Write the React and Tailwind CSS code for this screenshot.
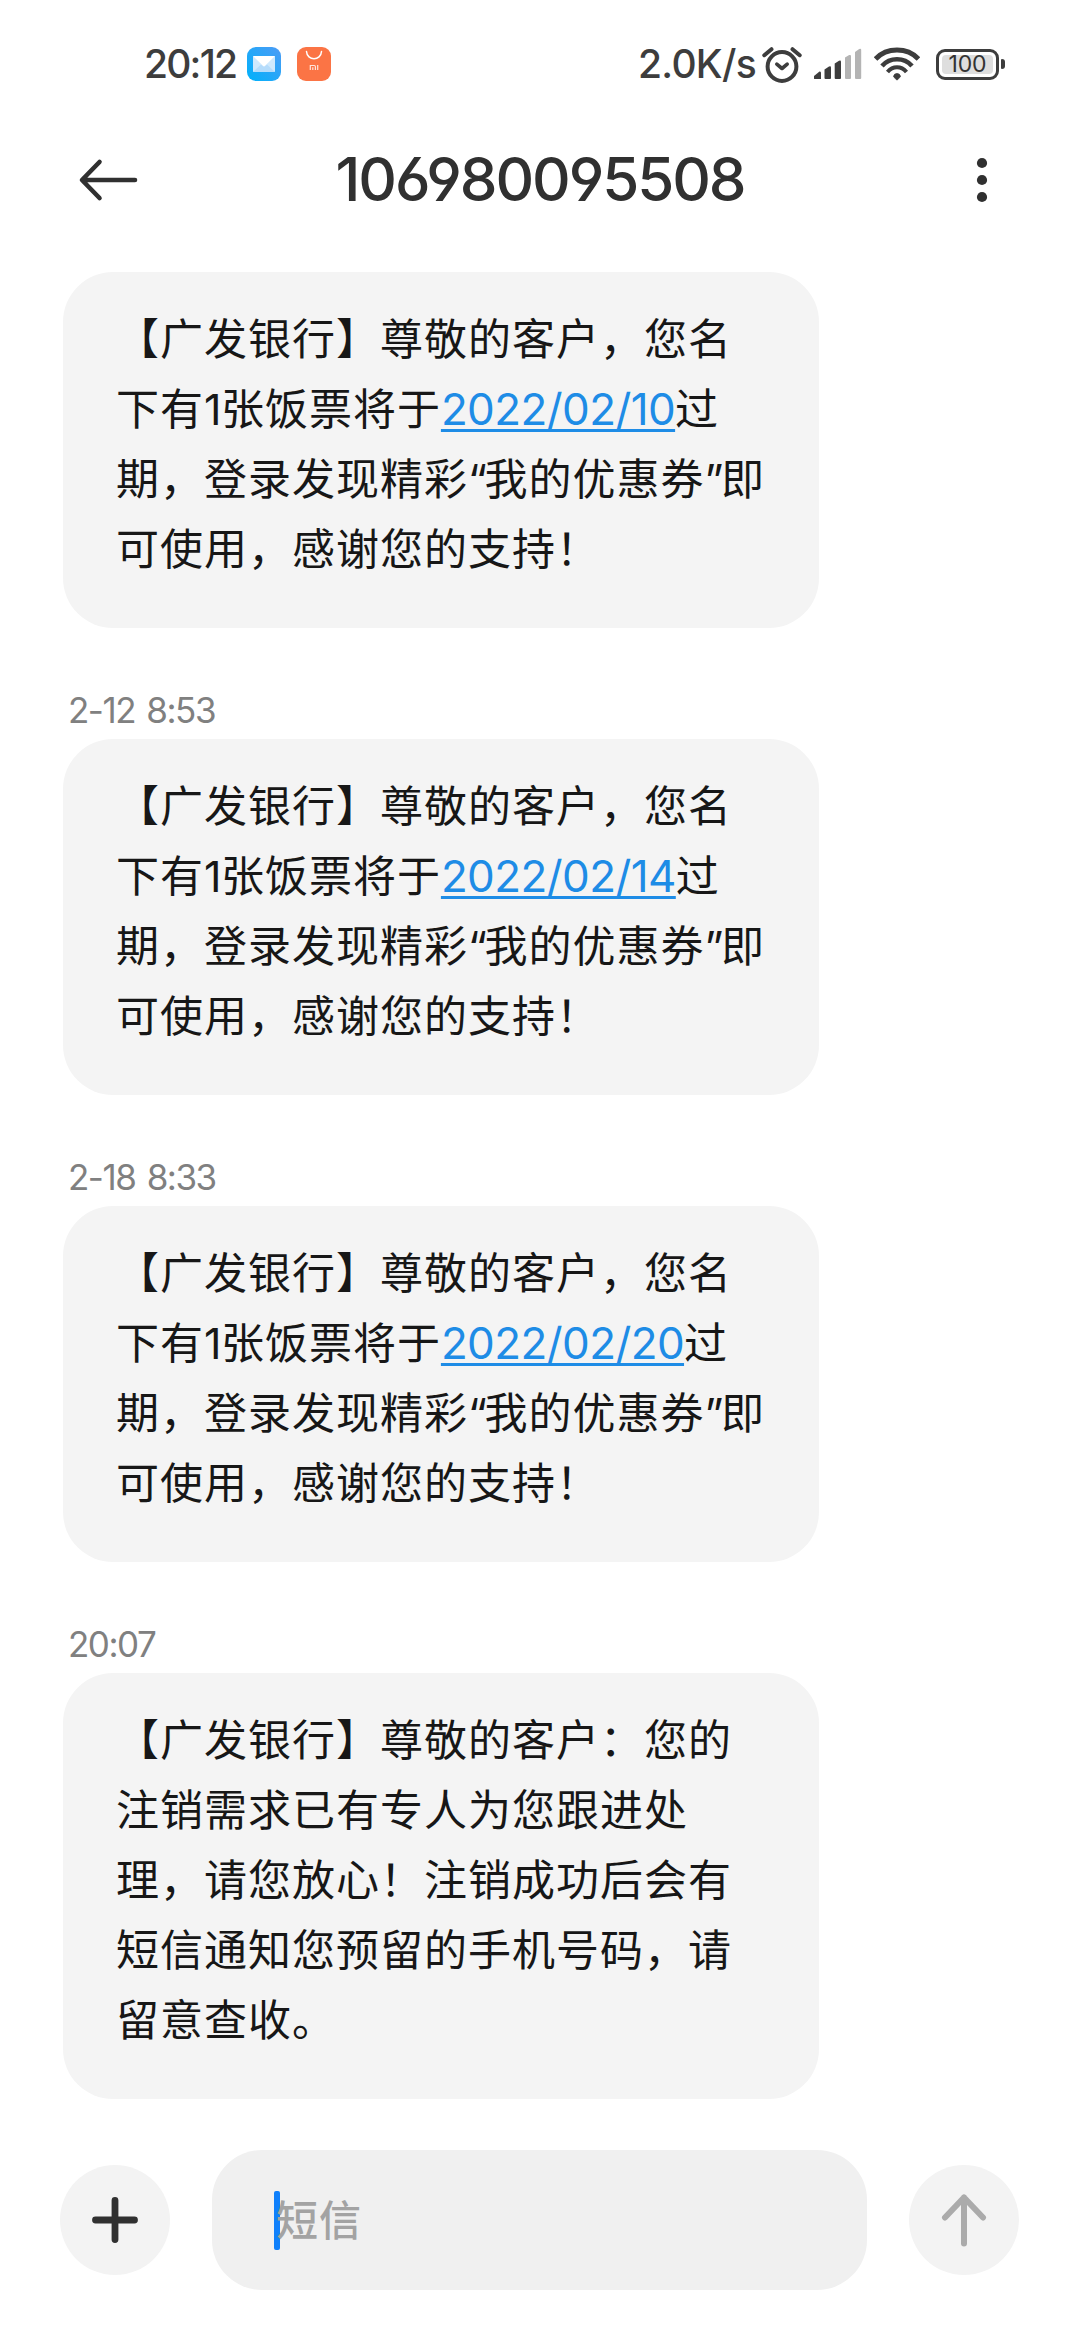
const messages = [
  { id: 1, time: null, lines: ["【广发银行】尊敬的客户，您名", ["下有1张饭票将于", "2022/02/10", "过"], "期，登录发现精彩“我的优惠券”即", "可使用，感谢您的支持！"] },
  { id: 2, time: "2-12 8:53", lines: ["【广发银行】尊敬的客户，您名", ["下有1张饭票将于", "2022/02/14", "过"], "期，登录发现精彩“我的优惠券”即", "可使用，感谢您的支持！"] },
  { id: 3, time: "2-18 8:33", lines: ["【广发银行】尊敬的客户，您名", ["下有1张饭票将于", "2022/02/20", "过"], "期，登录发现精彩“我的优惠券”即", "可使用，感谢您的支持！"] },
  { id: 4, time: "20:07", lines: ["【广发银行】尊敬的客户：您的", "注销需求已有专人为您跟进处", "理，请您放心！注销成功后会有", "短信通知您预留的手机号码，请", "留意查收。"] },
]

function MailIcon() {
  return (
    <svg className="ml-[10px] size-[34px]" viewBox="0 0 34 34">
      <defs>
        <linearGradient id="mail" x1="1" y1="0" x2="0" y2="1">
          <stop offset="0" stopColor="#4d9bf5" />
          <stop offset="1" stopColor="#00b2fb" />
        </linearGradient>
      </defs>
      <rect width="34" height="34" rx="9" fill="url(#mail)" />
      <rect x="6" y="9" width="22" height="16" rx="0.8" fill="#cfe9fd" />
      <path d="M6 25 14 17.5 17 20 20 17.5 28 25Z" fill="#b5dcfb" />
      <path d="M6 9H28L18 18.8Q17 19.6 16 18.8Z" fill="#fff" />
    </svg>
  )
}

function StoreIcon() {
  return (
    <svg className="ml-[16px] size-[34px]" viewBox="0 0 34 34" fill="none">
      <rect width="34" height="34" rx="9" fill="#fb7445" />
      <path d="M9.5 4.5C10 14 24 14 24.5 4.5" stroke="#fff" strokeWidth="1.5" strokeLinecap="round" />
      <path d="M13.3 23V18.5H17.2Q18.4 18.5 18.4 19.7V23M15.8 20.3V23M20.7 18V23" stroke="#ffe6dc" strokeWidth="1.2" />
    </svg>
  )
}

function AlarmIcon() {
  return (
    <svg className="ml-[6px] h-[37px] w-[40px]" viewBox="0 0 40 37" fill="none" stroke="#3d3d3d">
      <circle cx="20" cy="20.5" r="14.4" strokeWidth="4" />
      <path d="M2.3 9.2 9.5 3.2M30.5 3.2 37.7 9.2" strokeWidth="4" strokeLinecap="round" />
      <path d="M14.8 18.2 20 22.5 25.2 18.2" strokeWidth="3.6" strokeLinecap="round" strokeLinejoin="round" />
    </svg>
  )
}

function SignalIcon() {
  return (
    <svg className="ml-[12px] h-[32px] w-[48px]" viewBox="0 0 48 32" fill="#3d3d3d">
      <path d="M0 30.5V28L5.5 23.5Q7 23 7 25V31H1Q0 31 0 30.5Z" />
      <path d="M10.5 21.5 15 18.5Q17 17.5 17 19.5V30Q17 31 16 31H11.5Q10.5 31 10.5 30Z" />
      <path d="M20.7 15.5 25 12.8Q27 12 27 13.7V30Q27 31 26 31H21.7Q20.7 31 20.7 30Z" />
      <path d="M31 9.5 35.2 7Q37 6.5 37 8V30Q37 31 36 31H32Q31 31 31 30Z" fill="#b4b4b4" />
      <path d="M41 4 45.2 1Q47.2 0 47.2 2V30Q47.2 31 46.2 31H42Q41 31 41 30Z" fill="#b4b4b4" />
    </svg>
  )
}

function WifiIcon() {
  return (
    <svg className="ml-[12px] h-[34px] w-[46px]" viewBox="0 0 46 34" fill="none" stroke="#3d3d3d">
      <path d="M1.5 12Q10 3 23 3T44.5 12" strokeWidth="5" />
      <path d="M8 19Q14 12.3 23 12.3T38 19" strokeWidth="4.6" />
      <path d="M13.5 25Q17.5 20.3 23 20.3T32.5 25" strokeWidth="4" />
      <path d="M19.5 29.5Q20 26.5 23 26.5T26.5 29.5L23.8 32.6Q23 33.3 22.2 32.6Z" fill="#3d3d3d" strokeWidth="0.8" />
    </svg>
  )
}

function Battery() {
  return (
    <div className="ml-[16px] flex items-center gap-[2px]">
      <div className="flex h-[31px] w-[63px] rounded-[9px] border-[3px] border-[#3d3d3d] p-[3px]">
        <div className="flex flex-1 items-center justify-center rounded-[4px] bg-[#dedede] text-[23px] leading-none tracking-[-0.2px] text-[#333]">
          100
        </div>
      </div>
      <div className="h-[10px] w-[4px] rounded-r-[3px] rounded-l-[1px] bg-[#3d3d3d]" />
    </div>
  )
}

function StatusBar() {
  return (
    <div className="flex h-[128px] items-center justify-between pr-[75px] pl-[144px] text-[39px] text-[#3d3d3d]">
      <div className="flex items-center">
        <span className="w-[93px] whitespace-nowrap font-medium tracking-[-1.8px]">20:12</span>
        <MailIcon />
        <StoreIcon />
      </div>
      <div className="flex items-center">
        <span className="whitespace-nowrap font-medium tracking-[-0.7px]">2.0K/s</span>
        <AlarmIcon />
        <SignalIcon />
        <WifiIcon />
        <Battery />
      </div>
    </div>
  )
}

function Header() {
  return (
    <header className="flex h-[103px] items-center justify-between pr-[92px] pl-[78px] text-[#303030]">
      <svg className="h-[44px] w-[62px]" viewBox="0 0 62 44" fill="none" stroke="currentColor" strokeWidth="4.6" strokeLinecap="round" strokeLinejoin="round">
        <path d="M57 22H5M21.5 4 4 22 21.5 40" />
      </svg>
      <h1 className="mr-[36px] mb-[2px] text-[60px] leading-none font-medium tracking-[-2.1px]">106980095508</h1>
      <svg className="h-[46px] w-[12px]" viewBox="0 0 12 46" fill="currentColor">
        <circle cx="6" cy="6" r="5.1" />
        <circle cx="6" cy="23" r="5.1" />
        <circle cx="6" cy="40" r="5.1" />
      </svg>
    </header>
  )
}

// quotes and digits sit tighter than the hanzi around them
function Run({ text }) {
  return text.split(/([“”1])/).map((part, i) =>
    i % 2 ? <span key={i} className={part === "1" ? "tracking-[-0.6px]" : "tracking-[-2.4px]"}>{part}</span> : part
  )
}

function Message({ message }) {
  return (
    <div>
      {message.time && (
        <div className="flex h-[111px] items-end pb-[8px] pl-[5px] text-[35px] leading-[42px] tracking-[-1.5px] text-[#808080] [word-spacing:3px]">
          {message.time}
        </div>
      )}
      <div className="w-[756px] rounded-[50px] bg-[#f4f4f4] pt-[32px] pb-[44px] pl-[53px] text-[43px] leading-[70px] tracking-[1px] text-[#171717]">
        {message.lines.map((line, i) => (
          <p key={i} className="h-[70px] whitespace-nowrap">
            {Array.isArray(line) ? (
              <>
                <Run text={line[0]} />
                <a className="text-[44px] tracking-[-0.6px] text-[#1e8ce6] underline decoration-[3px] underline-offset-[4px]">{line[1]}</a>
                {line[2]}
              </>
            ) : (
              <Run text={line} />
            )}
          </p>
        ))}
      </div>
    </div>
  )
}

function Composer() {
  return (
    <div className="mt-[51px] flex items-center pl-[60px]">
      <button className="flex size-[110px] items-center justify-center rounded-full bg-[#f3f3f3]">
        <svg className="size-[46px]" viewBox="0 0 46 46" stroke="#303030" strokeWidth="6.8" strokeLinecap="round">
          <path d="M23 3.5V42.5M3.5 23H42.5" />
        </svg>
      </button>
      <div className="ml-[42px] flex h-[140px] w-[655px] items-center rounded-[50px] bg-[#f0f0f0] pl-[62px]">
        <div className="h-[59px] w-[6px] rounded-[2px] bg-[#0f80fb]" />
        <span className="-ml-[4px] text-[42px] font-medium tracking-[1px] text-[#a3a3a3]">短信</span>
      </div>
      <button className="ml-[42px] flex size-[110px] items-center justify-center rounded-full bg-[#f3f3f3]">
        <svg className="h-[54px] w-[46px]" viewBox="0 0 46 54" fill="none" stroke="#ababab" strokeWidth="6" strokeLinecap="round" strokeLinejoin="round">
          <path d="M23 50.5V4.5M4 24.5 23 4.5 42 24.5" />
        </svg>
      </button>
    </div>
  )
}

export default function App() {
  return (
    <div
      lang="zh-CN"
      className="h-[2340px] w-[1080px] overflow-hidden bg-white font-['Inter','Noto_Sans_CJK_SC',sans-serif] [font-feature-settings:'cv03','cv04']"
    >
      <StatusBar />
      <Header />
      <main className="mt-[41px] pl-[63px]">
        {messages.map((message) => (
          <Message key={message.id} message={message} />
        ))}
      </main>
      <Composer />
    </div>
  )
}
